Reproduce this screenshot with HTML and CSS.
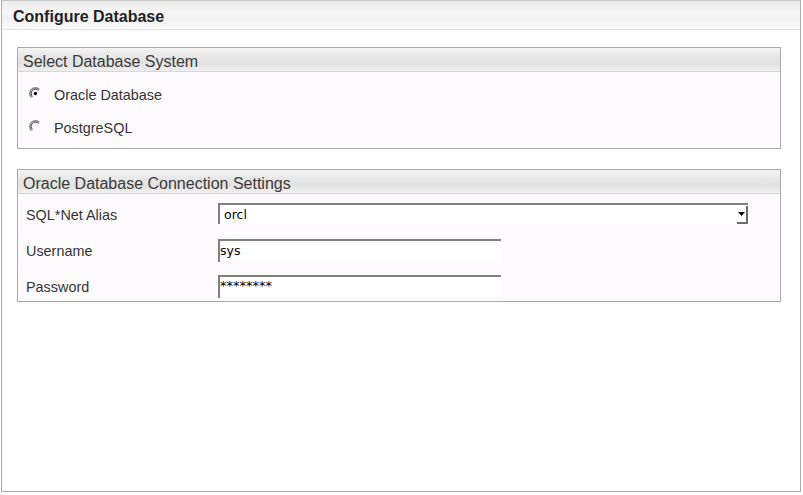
FILE: index.html
```html
<!DOCTYPE html>
<html>
<head>
<meta charset="utf-8">
<link rel="stylesheet" href="styles.css">
</head>
<body>
<div class="panel">
  <div class="panel-header">Configure Database</div>
  <div class="panel-body">
    <div class="section">
      <div class="section-header">Select Database System</div>
      <div class="section-body radios">
        <label class="radio-row">
          <svg class="radio" width="13" height="13" viewBox="0 0 13 13"><path d="M2.5 10.5 A5 5 0 0 1 10.5 2.5" fill="none" stroke="#888" stroke-width="1.6"/><path d="M3.5 9.5 A4 4 0 0 1 9.5 3.5" fill="none" stroke="#444" stroke-width="1"/><circle cx="6.5" cy="6.5" r="1.7" fill="#000"/></svg>
          <span>Oracle Database</span>
        </label>
        <label class="radio-row">
          <svg class="radio" width="13" height="13" viewBox="0 0 13 13"><path d="M2.5 10.5 A5 5 0 0 1 10.5 2.5" fill="none" stroke="#888" stroke-width="1.6"/><path d="M3.5 9.5 A4 4 0 0 1 9.5 3.5" fill="none" stroke="#555" stroke-width="1"/></svg>
          <span>PostgreSQL</span>
        </label>
      </div>
    </div>
    <div class="section">
      <div class="section-header">Oracle Database Connection Settings</div>
      <div class="section-body form">
        <div class="form-row">
          <div class="label">SQL*Net Alias</div>
          <div class="field select">
            <span class="value">orcl</span>
            <span class="arrow"><svg width="7" height="4" viewBox="0 0 7 4"><path d="M0 0 H7 L3.5 4 Z" fill="#000"/></svg></span>
          </div>
        </div>
        <div class="form-row">
          <div class="label">Username</div>
          <div class="field text"><span class="value">sys</span></div>
        </div>
        <div class="form-row">
          <div class="label">Password</div>
          <div class="field text"><span class="value pw">********</span></div>
        </div>
      </div>
    </div>
  </div>
</div>
</body>
</html>
```
FILE: styles.css
```css
html, body {
  margin: 0;
  padding: 0;
  background: #ffffff;
}
body {
  font-family: "Liberation Sans", Arial, sans-serif;
  color: #333;
}
.panel {
  margin-left: 1px;
  width: 798px;
  height: 490px;
  border: 1px solid #ababab;
  border-top-color: #c8c8c8;
  background: #fff;
}
.panel-header {
  height: 29px;
  box-sizing: border-box;
  border-bottom: 1px solid #e2e2e2;
  background: linear-gradient(#ececec 0%, #f6f6f6 45%, #f1f1f1 60%, #fbfbfb 100%);
  font-weight: bold;
  font-size: 16px;
  color: #222;
  padding: 7px 0 0 11px;
  line-height: 18px;
}
.panel-body {
  padding: 17px 19px 0 15px;
  display: flex;
  flex-direction: column;
  gap: 20px;
}
.section {
  border: 1px solid #a9a9a9;
  background: #fefbff;
}
.section-header {
  height: 24px;
  box-sizing: border-box;
  background: linear-gradient(#f4f4f4 0%, #e6e6e6 40%, #e3e3e3 70%, #f0f0f0 100%);
  border-bottom: 1px solid #d6d6d6;
  font-size: 16px;
  color: #3a3a3a;
  padding: 5px 0 0 5px;
  line-height: 18px;
}
.radios {
  height: 76px;
  padding: 0 0 0 11px;
  display: flex;
  flex-direction: column;
}
.radio-row {
  display: flex;
  align-items: center;
  height: 33px;
  flex-shrink: 0;
  font-size: 14.4px;
  color: #333;
}
.radios .radio-row:first-child {
  margin-top: 6px;
}
.radio {
  margin-right: 12px;
  margin-top: -3px;
}
.form {
  height: 107px;
  padding: 0 0 0 8px;
  display: flex;
  flex-direction: column;
}
.form-row {
  display: flex;
  align-items: center;
  height: 36px;
  flex-shrink: 0;
}
.form-row:first-child {
  margin-top: 3px;
}
.label {
  width: 192px;
  font-size: 14.4px;
  color: #333;
}
.field {
  box-sizing: border-box;
  background: #fff;
  border-top: 2px solid #7f7f7f;
  border-left: 2px solid #7f7f7f;
  display: flex;
  align-items: center;
  font-family: "DejaVu Sans", sans-serif;
  font-size: 12.5px;
  color: #000;
}
.select {
  width: 530px;
  height: 21px;
  margin-top: -3px;
}
.select .value {
  flex: 1;
  padding-left: 4px;
}
.arrow {
  width: 11px;
  height: 18px;
  box-sizing: border-box;
  border-right: 2px solid #6c6c6c;
  border-bottom: 2px solid #6c6c6c;
  display: flex;
  align-items: center;
  justify-content: center;
  margin-top: 1px;
}
.text {
  width: 283px;
  height: 23px;
  margin-top: -2px;
}
.text .value {
  padding-bottom: 2px;
}
.text .value.pw {
  font-size: 13px;
  padding-bottom: 4px;
}
```
